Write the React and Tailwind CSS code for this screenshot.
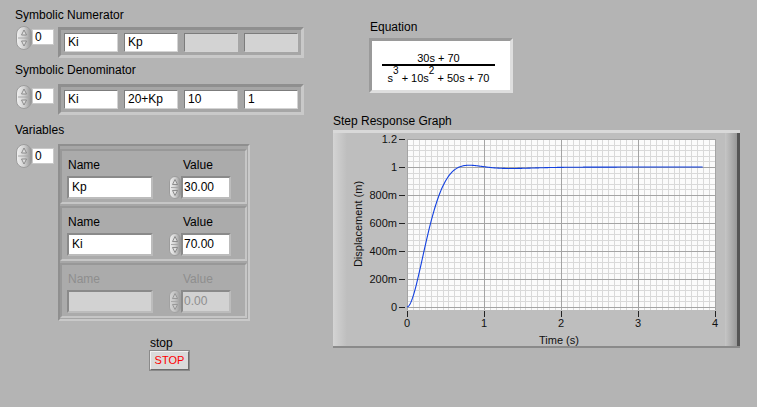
import React from 'react';

// step response of (30s + 70) / (s^3 + 10s^2 + 50s + 70), RK4
const stepResponse = () => {
    const dt = 0.002;
    const f = (a, b, c) => [b, c, 1 - 70 * a - 50 * b - 10 * c];
    let x1 = 0, x2 = 0, x3 = 0;
    const pts = [[0, 0]];
    const n = Math.round(3.84 / dt);
    for (let i = 1; i <= n; i++) {
        const k1 = f(x1, x2, x3);
        const k2 = f(x1 + dt / 2 * k1[0], x2 + dt / 2 * k1[1], x3 + dt / 2 * k1[2]);
        const k3 = f(x1 + dt / 2 * k2[0], x2 + dt / 2 * k2[1], x3 + dt / 2 * k2[2]);
        const k4 = f(x1 + dt * k3[0], x2 + dt * k3[1], x3 + dt * k3[2]);
        x1 += dt / 6 * (k1[0] + 2 * k2[0] + 2 * k3[0] + k4[0]);
        x2 += dt / 6 * (k1[1] + 2 * k2[1] + 2 * k3[1] + k4[1]);
        x3 += dt / 6 * (k1[2] + 2 * k2[2] + 2 * k3[2] + k4[2]);
        if (i % 5 === 0) pts.push([i * dt, 70 * x1 + 30 * x2]);
    }
    return pts;
};

const Spinner = ({ w = 16, h = 24, id, faded }) => {
    const cx = w / 2;
    const mid = h / 2;
    return (
        <svg width={w} height={h} viewBox={`0 0 ${w} ${h}`} className={faded ? 'shrink-0 opacity-60' : 'shrink-0'}>
            <defs>
                <linearGradient id={id} x1="0" x2="1" y1="0" y2="0">
                    <stop offset="0" stopColor="#f2f2f2" />
                    <stop offset="0.5" stopColor="#d2d2d2" />
                    <stop offset="1" stopColor="#929292" />
                </linearGradient>
            </defs>
            <rect x="0.5" y="0.5" width={w - 1} height={h - 1} rx={(w - 1) / 2} fill={`url(#${id})`} stroke="#9c9c9c" />
            <line x1="2" y1={mid} x2={w - 2} y2={mid} stroke="#a8a8a8" />
            <path d={`M${cx} ${mid - 8} L${cx + 2.5} ${mid - 3} L${cx - 2.5} ${mid - 3} Z`} fill="#dedede" stroke="#7a7a7a" strokeWidth="0.8" />
            <path d={`M${cx} ${mid + 8} L${cx + 2.5} ${mid + 3} L${cx - 2.5} ${mid + 3} Z`} fill="#dedede" stroke="#7a7a7a" strokeWidth="0.8" />
        </svg>
    );
};

const Cell = ({ children, empty }) => (
    <div
        className={`w-[54px] h-[19px] flex items-center pl-[3px] border border-[#7c7c7c] border-b-[#d4d4d4] border-r-[#d4d4d4] ${empty ? 'bg-[#d3d3d3]' : 'bg-white'}`}
    >
        {children}
    </div>
);

const IndexBox = () => (
    <div className="w-[22px] h-[16px] mt-[3px] bg-white border border-[#c9c9c9] pl-[2px] leading-[14px]">0</div>
);

const Variable = ({ name, value, disabled, id }) => (
    <div className="w-[187px] h-[55px] flex border-2 border-[#989898] border-b-[#c6c6c6] border-r-[#c6c6c6] bg-[#ababab] pt-[7px]">
        <div className={`ml-[5px] w-[86px] flex flex-col ${disabled ? 'text-[#8e8e8e]' : ''}`}>
            <div className="h-[15px] pl-[1px]">Name</div>
            <div className="mt-[3px] h-[23px] border-2 border-[#8a8a8a] border-b-[#bcbcbc] border-r-[#bcbcbc]">
                <div className={`h-full pl-[3px] flex items-center ${disabled ? 'bg-[#d2d2d2]' : 'bg-white'}`}>{name}</div>
            </div>
        </div>
        <div className={`ml-[16px] flex flex-col ${disabled ? 'text-[#8e8e8e]' : ''}`}>
            <div className="h-[15px] pl-[14px]">Value</div>
            <div className="mt-[3px] flex">
                <Spinner w={12} h={23} id={id} faded={disabled} />
                <div className="w-[50px] h-[23px] border-2 border-[#8a8a8a] border-b-[#bcbcbc] border-r-[#bcbcbc]">
                    <div className={`h-full pl-[1px] flex items-center ${disabled ? 'bg-[#d2d2d2]' : 'bg-white'}`}>{value}</div>
                </div>
            </div>
        </div>
    </div>
);

const Graph = () => {
    const px = t => 60 + 77 * t;
    const py = v => 174 - 140 * v;
    const pts = stepResponse();
    const d = pts.map(([t, v], i) => `${i ? 'L' : 'M'}${px(t).toFixed(2)} ${py(v).toFixed(2)}`).join(' ');
    const minorX = Array.from({ length: 53 }, (_, k) => Math.round(60 + (77 * k) / 13) + 0.5);
    const minorY = Array.from({ length: 31 }, (_, k) => Math.round(174 - 5.6 * k) + 0.5);
    const yTicks = [[0, '0'], [0.2, '200m'], [0.4, '400m'], [0.6, '600m'], [0.8, '800m'], [1, '1'], [1.2, '1.2']];
    return (
        <svg width="378" height="213" className="shrink-0 overflow-visible" fontFamily="Liberation Sans, Arial, sans-serif" fontSize="11">
            <rect x="60" y="6" width="309" height="171" fill="#fbfbfb" />
            <g shapeRendering="crispEdges" stroke="#d9d9d9">
                {minorX.map(x => <line key={`mx${x}`} x1={x} y1="6" x2={x} y2="177" />)}
                {minorY.map(y => <line key={`my${y}`} x1="60" y1={y} x2="369" y2={y} />)}
            </g>
            <g shapeRendering="crispEdges" stroke="#a4a4a4">
                {[0, 1, 2, 3, 4].map(t => <line key={`Mx${t}`} x1={Math.round(px(t)) + 0.5} y1="6" x2={Math.round(px(t)) + 0.5} y2="177" />)}
                {yTicks.map(([v]) => <line key={`My${v}`} x1="60" y1={Math.round(py(v)) + 0.5} x2="369" y2={Math.round(py(v)) + 0.5} />)}
            </g>
            <path d={d} fill="none" stroke="#1240e0" strokeWidth="1.1" />
            <g shapeRendering="crispEdges" stroke="#222">
                {yTicks.map(([v]) => <line key={`ty${v}`} x1="52" y1={Math.round(py(v)) + 0.5} x2="58" y2={Math.round(py(v)) + 0.5} />)}
                {[0, 1, 2, 3, 4].map(t => <line key={`tx${t}`} x1={Math.round(px(t)) + 0.5} y1="178" x2={Math.round(px(t)) + 0.5} y2="184" />)}
            </g>
            <g fill="#111">
                {yTicks.map(([v, s]) => <text key={`ly${v}`} x="50" y={Math.round(py(v)) + 4} textAnchor="end">{s}</text>)}
                {[0, 1, 2, 3, 4].map(t => <text key={`lx${t}`} x={px(t)} y="194" textAnchor="middle">{t}</text>)}
                <text x="212" y="211" textAnchor="middle">Time (s)</text>
                <text transform="translate(15,91) rotate(-90)" textAnchor="middle">Displacement (m)</text>
            </g>
        </svg>
    );
};

export default function App() {
    return (
        <div className="w-[757px] h-[407px] overflow-hidden bg-[#b4b4b4] flex font-['Liberation_Sans',Arial,sans-serif] text-[12px] leading-[15px] text-black">
            {/* left column: arrays + stop */}
            <div className="w-[333px] shrink-0 flex flex-col pl-[15px] pt-[8px]">
                <div className="h-[15px]">Symbolic Numerator</div>
                <div className="mt-[3px] flex items-start">
                    <div className="ml-[1px]"><Spinner id="sp1" /></div>
                    <IndexBox />
                    <div className="ml-[4px] mt-[1px] flex gap-[6px] p-[3px] border-[3px] border-[#8f8f8f] border-b-[#c9c9c9] border-r-[#c9c9c9] bg-[#a6a6a6]">
                        <Cell>Ki</Cell>
                        <Cell>Kp</Cell>
                        <Cell empty />
                        <Cell empty />
                    </div>
                </div>

                <div className="h-[15px] mt-[5px]">Symbolic Denominator</div>
                <div className="mt-[6px] flex items-start">
                    <div className="ml-[1px] mt-[1px]"><Spinner id="sp2" /></div>
                    <div className="mt-[1px]"><IndexBox /></div>
                    <div className="ml-[4px] flex gap-[6px] p-[3px] border-[3px] border-[#8f8f8f] border-b-[#c9c9c9] border-r-[#c9c9c9] bg-[#a6a6a6]">
                        <Cell>Ki</Cell>
                        <Cell>20+Kp</Cell>
                        <Cell>10</Cell>
                        <Cell>1</Cell>
                    </div>
                </div>

                <div className="h-[15px] mt-[8px]">Variables</div>
                <div className="mt-[6px] flex items-start">
                    <div className="ml-[1px]"><Spinner id="sp3" /></div>
                    <div className="mt-[1px]"><IndexBox /></div>
                    <div className="ml-[4px] flex flex-col gap-[2px] pt-[3px] pr-[1px] pb-[1px] border-2 border-[#8f8f8f] border-b-[#c9c9c9] border-r-[#c9c9c9] bg-[#a6a6a6]">
                        <Variable name="Kp" value="30.00" id="v1" />
                        <Variable name="Ki" value="70.00" id="v2" />
                        <Variable name="" value="0.00" id="v3" disabled />
                    </div>
                </div>

                <div className="ml-[135px] mt-[15px] h-[15px]">stop</div>
                <div className="ml-[135px] w-[39px] h-[19px] flex items-center justify-center bg-[#dadada] border border-[#f2f2f2] border-b-[#6c6c6c] border-r-[#6c6c6c] shadow-[0_0_0_1px_#8a8a8a] text-[11px] text-[#ff0000]">
                    STOP
                </div>
            </div>

            {/* right column: equation + graph */}
            <div className="flex flex-col pt-[20px]">
                <div className="ml-[37px] h-[15px]">Equation</div>
                <div className="ml-[36px] mt-[3px] w-[144px] h-[55px] border-[3px] border-[#9a9a9a] border-b-[#dedede] border-r-[#dedede] bg-white">
                    <div className="ml-[10px] w-[113px] flex flex-col items-center text-[11px] leading-[13px]">
                        <div className="mt-[11px]">30s + 70</div>
                        <div className="-mt-[1px] w-full h-[2px] bg-black" />
                        <div className="mt-[6px] whitespace-nowrap">
                            s<span className="relative -top-[8px] text-[10px]">3</span> + 10s<span className="relative -top-[8px] text-[10px]">2</span> + 50s + 70
                        </div>
                    </div>
                </div>

                <div className="mt-[21px] h-[15px]">Step Response Graph</div>
                <div className="mt-[1px] w-[407px] h-[218px] flex bg-[#bebebe] border-t-[3px] border-t-[#d9d9d9] border-b-2 border-b-[#8a8a8a]">
                    <div className="w-[14px] shrink-0 bg-gradient-to-r from-[#d4d4d4] to-[#bebebe]" />
                    <Graph />
                    <div className="w-[15px] shrink-0 flex">
                        <div className="w-[12px] bg-gradient-to-r from-[#c6c6c6] to-[#999999]" />
                        <div className="w-[3px] bg-[#555555]" />
                    </div>
                </div>
            </div>
        </div>
    );
}
